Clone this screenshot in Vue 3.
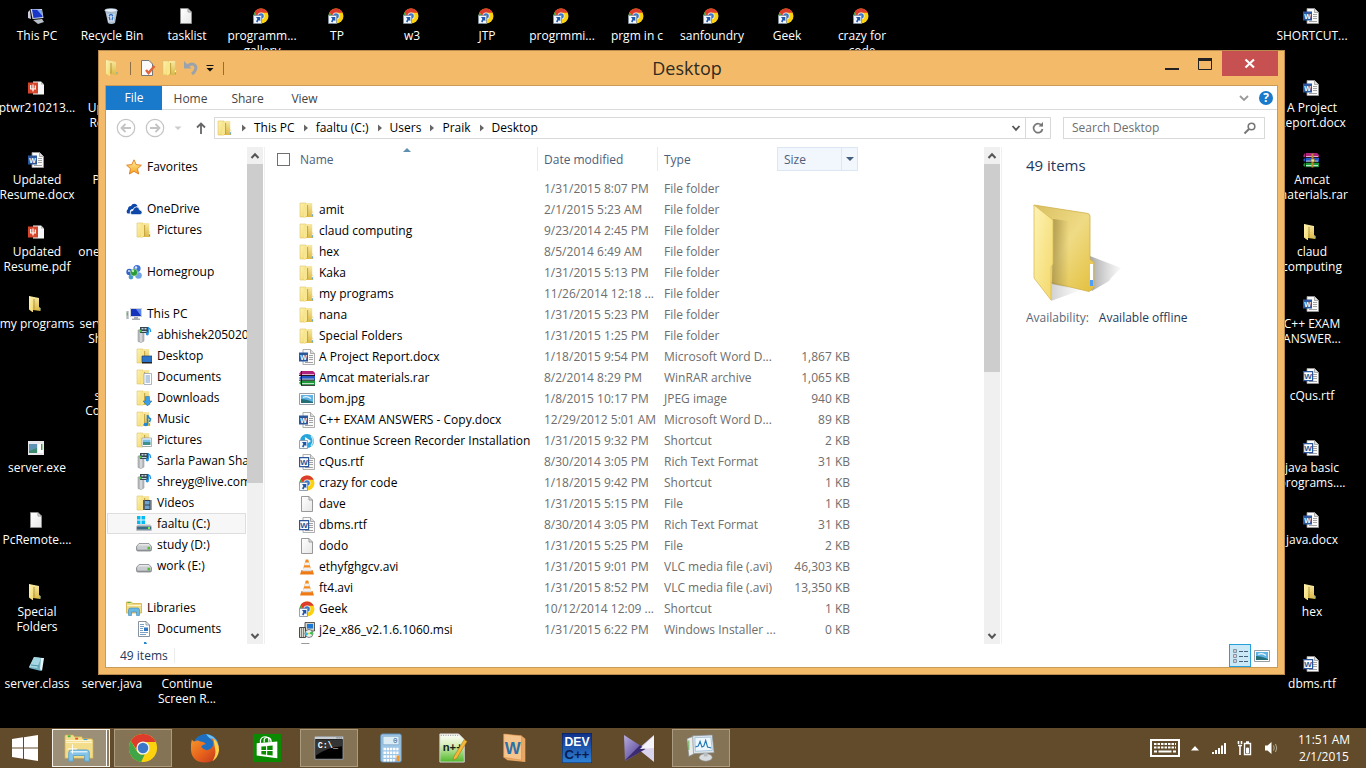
<template>
  <div class="screen">
    <svg class="sprite" aria-hidden="true">
      <defs>
        <linearGradient id="gLeaf" x1="0" y1="0" x2="1" y2="1">
          <stop offset="0" stop-color="#fdf3b4" />
          <stop offset="1" stop-color="#f3d768" />
        </linearGradient>
        <linearGradient id="gBack" x1="0" y1="0" x2="1" y2="1">
          <stop offset="0" stop-color="#d9bf62" />
          <stop offset="0.5" stop-color="#efdb85" />
          <stop offset="1" stop-color="#e3bf3c" />
        </linearGradient>
        <linearGradient id="gSide" x1="0" y1="0" x2="0" y2="1">
          <stop offset="0" stop-color="#f8e9a4" />
          <stop offset="1" stop-color="#dcb944" />
        </linearGradient>
        <linearGradient id="gShade" x1="0" y1="0" x2="1" y2="0">
          <stop offset="0" stop-color="#8f7a35" stop-opacity="0.6" />
          <stop offset="1" stop-color="#8f7a35" stop-opacity="0" />
        </linearGradient>
        <linearGradient id="gShadow" x1="0" y1="0" x2="1" y2="0">
          <stop offset="0" stop-color="#555" stop-opacity="0.55" />
          <stop offset="1" stop-color="#888" stop-opacity="0.05" />
        </linearGradient>
        <linearGradient id="gBlue" x1="0" y1="0" x2="0" y2="1">
          <stop offset="0" stop-color="#0f2f86" />
          <stop offset="1" stop-color="#2f83d8" />
        </linearGradient>
        <linearGradient id="gDrive" x1="0" y1="0" x2="0" y2="1">
          <stop offset="0" stop-color="#f5f5f5" />
          <stop offset="1" stop-color="#8c8f94" />
        </linearGradient>
        <linearGradient id="gStar" x1="0" y1="0" x2="0" y2="1">
          <stop offset="0" stop-color="#fff3a8" />
          <stop offset="1" stop-color="#f6a21c" />
        </linearGradient>
        <linearGradient id="gFox" x1="0" y1="0" x2="1" y2="1">
          <stop offset="0" stop-color="#f59a2d" />
          <stop offset="0.5" stop-color="#e8641c" />
          <stop offset="1" stop-color="#c0341c" />
        </linearGradient>
        <linearGradient id="gPaper" x1="0" y1="0" x2="1" y2="1">
          <stop offset="0" stop-color="#ffffff" />
          <stop offset="1" stop-color="#e6e6e6" />
        </linearGradient>
        <linearGradient id="gNpp" x1="0" y1="0" x2="0" y2="1">
          <stop offset="0" stop-color="#ffffff" />
          <stop offset="0.4" stop-color="#d8efb8" />
          <stop offset="1" stop-color="#4fb82a" />
        </linearGradient>
        <linearGradient id="gKm" x1="0" y1="0" x2="1" y2="1">
          <stop offset="0" stop-color="#b9aee0" />
          <stop offset="1" stop-color="#3c2a84" />
        </linearGradient>
      </defs>

      <symbol id="folder" viewBox="0 0 16 16">
        <path d="M1 1h6v14H1z" fill="url(#gLeaf)" stroke="#dcc268" stroke-width=".6" />
        <path d="M7 1h6.200v8.500l1 .8V15H7z" fill="url(#gSide)" />
        <path d="M5 1l3.400 2v10.500L5 15.700z" fill="#f8e58f" />
        <path d="M8.600 3v11" stroke="#bd9c38" stroke-width=".9" />
        <path d="M13.400 10.500v2" stroke="#fff" />
        <path d="M13.400 12.300v2" stroke="#5aa7dd" />
      </symbol>
      <symbol id="folder-open" viewBox="0 0 16 16">
        <path d="M1 0l10 2v9l1.500 1v3L5 14z" fill="url(#gSide)" />
        <path d="M1 0l4.500 2.500V9l-.5.500v7L1 13.500z" fill="url(#gLeaf)" />
        <path d="M6 3v10.500" stroke="#a58a37" stroke-width=".8" />
        <path d="M12 12v2" stroke="#5aa7dd" stroke-width=".8" />
      </symbol>
      <symbol id="folder-big" viewBox="0 0 88 98">
        <path d="M57 52L88 64 78 74l-2 3-17 10-4-4z" fill="url(#gShadow)" />
        <path d="M18 78l30 8-30 11z" fill="url(#gShadow)" opacity=".5" />
        <path d="M1 1l54 8.500q2 .5 2 3v43l4 2.500v26l-5 3.500-38-9z" fill="url(#gBack)" stroke="#d1b049" stroke-width=".8" />
        <path d="M20 15l16 2v67l-17-4z" fill="url(#gShade)" />
        <path d="M57 60h3v22h-3z" fill="#fff" />
        <path d="M57 76h3v6h-3z" fill="#4f9df5" />
        <path d="M1 1l19 15v44l-2 3v33L1 74z" fill="url(#gLeaf)" stroke="#d9bd5a" stroke-width=".8" />
      </symbol>

      <symbol id="pc" viewBox="0 0 16 16">
        <path d="M0 4l2-2 1 9-3-1z" fill="#ccd" />
        <path d="M2.500 1H14l1.500 9-11 1z" fill="#d5dbe6" />
        <path d="M4 1.500L13.500 2l1 7-9 1z" fill="#1836c8" />
        <path d="M9 1.700l4.500.3 1 6z" fill="#7fa8f5" />
        <path d="M5 12l9-1 2 3-6 2z" fill="#b9bfc9" />
      </symbol>
      <symbol id="recycle" viewBox="0 0 16 16">
        <path d="M2 2h12.500L12 15q-4 2-7 0z" fill="#aebfd2" />
        <ellipse cx="8" cy="2.300" rx="6.300" ry="1.800" fill="#e8f0f8" stroke="#8fa2b8" stroke-width=".6" />
        <path d="M5 6l1 8M8 5v9M11 6l-1 8" stroke="#e6edf5" stroke-width=".9" />
        <path d="M6 8l2-2 2 2M10 9l-1 3M6 9l1 3" stroke="#2a6fd0" stroke-width="1.200" fill="none" />
      </symbol>
      <symbol id="file" viewBox="0 0 16 16">
        <path d="M2.500.5h7.500l3.500 3.500v11.500h-11z" fill="url(#gPaper)" stroke="#8e8e8e" stroke-width=".9" />
        <path d="M10 .5V4h3.500" fill="none" stroke="#8e8e8e" stroke-width=".9" />
      </symbol>
      <symbol id="chrome-ball" viewBox="0 0 32 32">
        <circle cx="16" cy="16" r="15" fill="#fcd20f" />
        <path d="M3 8.500A15 15 0 0 1 29.500 9.500H16a7 7 0 0 0-6.500 9z" fill="#dd3b2c" />
        <path d="M3 8.500l6.500 11A7 7 0 0 0 18 22.500L14 31A15 15 0 0 1 3 8.500z" fill="#3fa546" />
        <circle cx="16" cy="16" r="7" fill="#f4f4f4" />
        <circle cx="16" cy="16" r="5.600" fill="#3b78c9" />
      </symbol>
      <symbol id="arrow-box" viewBox="0 0 16 16">
        <path d="M.5 7.500h8v8h-8z" fill="#f4f7fb" stroke="#7d8ea5" stroke-width=".8" />
        <path d="M3 9h4.300v4.300L5.900 12l-1.500 2.500-1.400-1L4.400 11z" fill="#1d56a8" />
      </symbol>
      <symbol id="chrome-link" viewBox="0 0 16 16">
        <use href="#chrome-ball" x="0" y="0" width="16" height="16" />
        <use href="#arrow-box" width="16" height="16" />
      </symbol>
      <symbol id="ppt" viewBox="0 0 16 16">
        <path d="M5 1.500h8l3 3v10H5z" fill="#f6f6f6" />
        <path d="M13 1.500v3h3" fill="#bbb" />
        <path d="M0 2.500h10v11H0z" fill="#d5452b" />
        <path d="M2.700 5v4h4.600V5.500M5 4.500v7" stroke="#fff" stroke-width="1.200" fill="none" />
      </symbol>
      <symbol id="page-lines" viewBox="0 0 16 16">
        <path d="M4 .5h7.500l4 4v11H4z" fill="#fafafa" stroke="#9a9a9a" stroke-width=".8" />
        <path d="M11.500.5v4h4" fill="#ddd" stroke="#9a9a9a" stroke-width=".8" />
        <path d="M10 6.500h4M10 8.500h4M10 10.500h4M6 13.500h8" stroke="#8d8d8d" stroke-width=".8" />
      </symbol>
      <symbol id="word" viewBox="0 0 16 16">
        <use href="#page-lines" width="16" height="16" />
        <path d="M0 3.500h9v9H0z" fill="#2b579a" />
        <text x="4.500" y="10.500" class="glyph" font-size="7" fill="#fff">W</text>
      </symbol>
      <symbol id="rtf" viewBox="0 0 16 16">
        <use href="#page-lines" width="16" height="16" />
        <path d="M.6 3.600h9v9h-9z" fill="#fff" stroke="#2b579a" stroke-width="1.200" />
        <text x="5" y="11" class="glyph" font-size="8" fill="#2b579a">W</text>
      </symbol>
      <symbol id="rar" viewBox="0 0 16 16">
        <path d="M2 1h12l2 2v3H2L0 4z" fill="#b0237a" />
        <path d="M2 6h14v4H2L0 8z" fill="#2458c4" />
        <path d="M2 10.500h14v4.500H2l-2-2z" fill="#1c9a3a" />
        <path d="M3 4.800h12M3 9.200h12M3 13.700h12" stroke="#fff" stroke-width=".9" />
        <path d="M0 5.500h16M0 10.200h16M2 15.400h14M2.500 1v14" stroke="#111" stroke-width=".9" />
      </symbol>
      <symbol id="rar-belt" viewBox="0 0 16 16">
        <use href="#rar" width="16" height="16" />
        <path d="M9.500 1.500v14" stroke="#b98733" stroke-width="2" />
        <path d="M8 7h3.500v3H8z" fill="#f3dc8b" stroke="#7c5a1b" stroke-width=".6" />
      </symbol>
      <symbol id="exe" viewBox="0 0 16 16">
        <path d="M0 1h16v14H0z" fill="#e8e8ec" />
        <path d="M1 4h8v9H1z" fill="#3d8a6f" />
        <path d="M1 4h8v4L1 11z" fill="#5f93b5" />
        <path d="M10 4h5v9h-5z" fill="#fff" />
        <path d="M13 4h1.500v6H13z" fill="#4c9a59" />
      </symbol>
      <symbol id="notepad" viewBox="0 0 16 16">
        <path d="M6 1l9 1-2 13-12-3z" fill="#6fb0c3" />
        <path d="M6 1l7 1-4 10-8-1z" fill="#a6d6e2" />
        <path d="M13 2l3 0-2 13-2-2z" fill="#e8f4f7" />
        <path d="M3 9l8 1" stroke="#4f93a9" />
      </symbol>
      <symbol id="star" viewBox="0 0 16 16">
        <path d="M8 .8l2.200 4.800 5.200.6-3.900 3.500 1.100 5.300L8 12.300 3.400 15l1.100-5.300L.6 6.200l5.200-.6z" fill="url(#gStar)" stroke="#e07b1c" stroke-width=".9" />
      </symbol>
      <symbol id="onedrive" viewBox="0 0 16 16">
        <path d="M1.500 12.500Q-.5 10 2 8q0-3 3-3 1.500-3 4.500-2 2 .8 2 2.500Q8 5 7 8 3 8.500 4 12.500z" fill="#0d47a8" />
        <path d="M6 13.500q-2-.5-1.500-2.500.5-1.500 2.500-1.500.5-3.500 3.500-3.500 2.500 0 3 3 2.500.3 2.500 2.500 0 2-2 2z" fill="#0d47a8" stroke="#fff" stroke-width=".5" />
      </symbol>
      <symbol id="homegroup" viewBox="0 0 16 16">
        <circle cx="11" cy="4.500" r="3.600" fill="#3e74d8" />
        <circle cx="3.500" cy="8" r="3.200" fill="#3562c9" />
        <circle cx="12.500" cy="11.500" r="3.300" fill="#6fa4e6" />
        <circle cx="5" cy="13" r="2.400" fill="#4e9acb" />
        <circle cx="8" cy="8.500" r="3.600" fill="#2b9a38" stroke="#d8f2d4" stroke-width=".5" />
        <circle cx="10" cy="3.500" r="1.200" fill="#dbe8ff" />
        <circle cx="3" cy="7" r="1" fill="#dbe8ff" />
        <circle cx="7" cy="7" r="1.200" fill="#b8efb2" />
      </symbol>
      <symbol id="this-pc" viewBox="0 0 16 16">
        <path d="M.3 5h2.400v8H.3z" fill="#b4b8bd" />
        <path d="M.8 6.500h1.200v3H.8z" fill="#57c240" />
        <path d="M4 2h12v9H4z" fill="#cdd2d9" />
        <path d="M5 3h10v7H5z" fill="#1633bd" />
        <path d="M10 3h5v7z" fill="#5c86ea" />
        <path d="M8 11h4v1.500h2V14H6v-1.500h2z" fill="#a9adb3" />
      </symbol>
      <symbol id="media" viewBox="0 0 16 16">
        <path d="M2 3l6-1v12l-3 1.500-3-1z" fill="#b9bcbf" stroke="#85898d" stroke-width=".5" />
        <path d="M5 3v12" stroke="#eceeef" />
        <path d="M4 0h8v6H4z" fill="#39434d" />
        <path d="M5.500 1h2v1.500h-2zM8.500 1h2v1.500h-2zM5.500 4h5v1h-5z" fill="#b9d6e8" />
        <circle cx="4.500" cy="4" r="1.200" fill="#4bc43c" />
        <path d="M12.500 0v6M12.500.5q2.500 1.500 2 4.500" stroke="#2b95e0" stroke-width="1.300" fill="none" />
        <circle cx="11.300" cy="6.800" r="1.600" fill="#2b95e0" />
      </symbol>
      <symbol id="f-desktop" viewBox="0 0 16 16">
        <use href="#folder" width="16" height="16" />
        <path d="M6 8h10v6.500H6z" fill="#2c74c9" stroke="#1d3e6e" stroke-width=".7" />
        <path d="M6 14h10v1.500H6z" fill="#222" />
      </symbol>
      <symbol id="f-docs" viewBox="0 0 16 16">
        <use href="#folder" width="16" height="16" />
        <path d="M8 4.500h7.500v11H8z" fill="#fff" stroke="#8c97a5" stroke-width=".7" />
        <path d="M9.500 7h4.500M9.500 9h4.500M9.500 11h4.500M9.500 13h4.500" stroke="#4c7fb5" stroke-width=".8" />
      </symbol>
      <symbol id="f-down" viewBox="0 0 16 16">
        <use href="#folder" width="16" height="16" />
        <path d="M9.500 6.500h4V11H16l-4.500 5L7 11h2.500z" fill="#3c9fe5" stroke="#1d6aae" stroke-width=".5" />
      </symbol>
      <symbol id="f-music" viewBox="0 0 16 16">
        <use href="#folder" width="16" height="16" />
        <path d="M11.500 4v9M11.500 4q1 3 3 4-.5 1.500-1 3" stroke="#1e87d6" stroke-width="1.600" fill="none" />
        <ellipse cx="9.800" cy="13.500" rx="2.300" ry="1.800" fill="#1e87d6" />
      </symbol>
      <symbol id="f-pics" viewBox="0 0 16 16">
        <use href="#folder" width="16" height="16" />
        <path d="M6 6h9.500v8.500H6z" fill="#fff" stroke="#8a95a0" stroke-width=".7" />
        <path d="M7 7.500h7.500V10H7z" fill="#77bfe9" />
        <path d="M7 10h7.500v3H7z" fill="#3f8f8b" />
      </symbol>
      <symbol id="f-video" viewBox="0 0 16 16">
        <use href="#folder" width="16" height="16" />
        <path d="M7 5h8.500v10H7z" fill="#34404c" />
        <path d="M9 6h4.500v3.500H9zM9 10.500h4.500V14H9z" fill="#6ea5cf" />
        <path d="M8 5.500v9M14.600 5.500v9" stroke="#e7edf2" stroke-width=".8" stroke-dasharray="1 1" />
      </symbol>
      <symbol id="drive-c" viewBox="0 0 16 16">
        <path d="M1 0h3.500v3.500H1zM5.500 0H9v3.500H5.500zM1 4.500h3.500V8H1zM5.500 4.500H9V8H5.500z" fill="#00bcf2" />
        <path d="M2 8.500h12l2 2v3q0 1.500-1.500 1.500h-13Q0 15 0 13.500v-3z" fill="#b9bfc5" />
        <path d="M1 10.500h14v3H1z" fill="#3a6d84" />
        <path d="M12 11h2v2h-2z" fill="#7cf04c" />
      </symbol>
      <symbol id="drive" viewBox="0 0 16 16">
        <path d="M3 6.500h10l2.500 3v3q0 1.500-1.500 1.500H2Q.5 14 .5 12.500v-3z" fill="url(#gDrive)" stroke="#7f8388" stroke-width=".8" />
        <path d="M1.500 9.500h13v3h-13z" fill="#c9ccd0" />
        <path d="M11.500 9.800h2.500v2.700h-2.500z" fill="#4bc22e" />
      </symbol>
      <symbol id="libs" viewBox="0 0 16 16">
        <path d="M.5 2h5l1 1.500h9V13H.5z" fill="#f0da82" stroke="#cfae44" stroke-width=".8" />
        <path d="M1.500 2.500h3" stroke="#46b649" />
        <path d="M1 5.500h14" stroke="#fff6c9" />
        <path d="M2.500 15.500V10q0-2 2-2h7q2 0 2 2v5.500h-3V12h-5v3.500z" fill="#6bb8e2" stroke="#3d87b8" stroke-width=".6" />
      </symbol>
      <symbol id="doc-lib" viewBox="0 0 16 16">
        <path d="M2.500.5h7.500l3.500 3.500v11.500h-11z" fill="#fff" stroke="#7b8794" stroke-width=".9" />
        <path d="M10 .5V4h3.500" fill="none" stroke="#7b8794" stroke-width=".8" />
        <path d="M4 3.500h4M4 5.500h4M4 7.500h3M4 9.500h3M4 11.500h8M4 13.500h6" stroke="#6d94bd" stroke-width=".9" />
        <path d="M8 6.500h4v3.500H8z" fill="#2d74c4" />
      </symbol>
      <symbol id="note" viewBox="0 0 16 16">
        <path d="M9 0V12M9 0q1 3.500 4.500 5-.5 2-1.500 4" stroke="#2588d0" stroke-width="2" fill="none" />
        <ellipse cx="7" cy="12.500" rx="3" ry="2.300" fill="#2588d0" />
      </symbol>
      <symbol id="jpg" viewBox="0 0 16 16">
        <path d="M.5 2.500h15v11H.5z" fill="#fff" stroke="#8b949c" stroke-width=".9" />
        <path d="M2 4h12v8H2z" fill="#5db3e6" />
        <path d="M2 8q5 0 12 3v1H2z" fill="#256f79" />
        <path d="M4 6.500q4-2 8 1" stroke="#e9f6fd" stroke-width="1.200" fill="none" />
      </symbol>
      <symbol id="recorder" viewBox="0 0 16 16">
        <circle cx="8" cy="8" r="7" fill="#2aa5dc" />
        <path d="M6 4l6 4-6 4z" fill="#fff" />
        <path d="M12 3q4 4 0 10" stroke="#bfe7f7" stroke-width="1.300" fill="none" />
        <use href="#arrow-box" width="16" height="16" />
      </symbol>
      <symbol id="vlc" viewBox="0 0 16 16">
        <path d="M6.800.5h2.400L12.500 12h-9z" fill="#f58a1f" />
        <path d="M6 3.500h4l.9 2.700H5.200zM4.600 8.500h6.900l.8 2.500H3.800z" fill="#f1f1f1" />
        <path d="M2.500 11h11l1.500 4.500H1z" fill="#ef7a12" />
        <path d="M3.500 11h9l.3 1.200H3.200z" fill="#d9dce0" />
      </symbol>
      <symbol id="msi" viewBox="0 0 16 16">
        <path d="M6 .5h9.500V9H6z" fill="#d2d2c8" stroke="#333" stroke-width=".8" />
        <path d="M8 2h6v4.500H8z" fill="#1c79d8" />
        <path d="M.5 5.500h6v10h-6z" fill="#d8d8ce" stroke="#222" stroke-width=".8" />
        <path d="M2.500 5.500v10M4.500 5.500v10" stroke="#444" stroke-width=".6" />
        <circle cx="10" cy="11.500" r="4" fill="#e7f0ea" stroke="#333" stroke-width=".6" />
        <path d="M10 11.500l3-2.500q1.200 2 .5 4z" fill="#37c24a" />
        <path d="M10 11.500L7 14q-1-2-.5-4z" fill="#2fb6e6" />
        <circle cx="10" cy="11.500" r="1" fill="#e8de3a" />
      </symbol>

      <symbol id="t-explorer" viewBox="0 0 32 32">
        <path d="M1 3q0-1 1-1h8l1 2h8l1 2h9q2 0 2 2v19H1z" fill="#f3dd8b" stroke="#c9a84b" stroke-width=".7" />
        <path d="M4 2.500h3v2H4z" fill="#39b54a" />
        <path d="M12 5h3v2h-3z" fill="#e2562b" />
        <path d="M21 6.500h4v2h-4z" fill="#2f9be0" />
        <path d="M2 8h27M2 10h28" stroke="#fff8d8" />
        <path d="M5 30V21q0-3 3-3h16q3 0 3 3v9h-5v-6H10v6z" fill="#84c4e8" stroke="#4f9bc8" stroke-width=".8" />
        <path d="M7 20h18" stroke="#dff2fc" stroke-width="1.500" />
        <path d="M9 12v10M4 17h10" stroke="#fff" stroke-width="1" />
      </symbol>
      <symbol id="t-firefox" viewBox="0 0 32 32">
        <circle cx="17" cy="15" r="14" fill="#1f6fc0" />
        <path d="M17 1q9 1 13 10-5-3-8-5t-5-5z" fill="#6fc1ee" />
        <path d="M2 7q1 2 3 2 3-2 6 0 4 0 6 3-4 0-5 3 5 6 11 1 4-5-1-11 9 3 9 12-1 14-15 14.500Q2 31 1 18q-.5-6 1-11z" fill="url(#gFox)" />
        <path d="M25 6q6 4 6 12-1 8-7 12 4-7 3-12t-2-12z" fill="#fbd24a" />
      </symbol>
      <symbol id="t-store" viewBox="0 0 32 32">
        <path d="M1 1h30v30H1z" fill="#0a8a00" />
        <path d="M5 11l22-2v18L5 24z" fill="#fff" />
        <path d="M9 12V8q1-4 5-4t4 4v2M13 10V7q1-3 4.500-2 3 1 3 5" stroke="#fff" stroke-width="1.300" fill="none" />
        <path d="M10 14.500l5-.5v4h-5zM16.200 13.900l5.800-.6V18h-5.800zM10 19.200h5v4l-5-.6zM16.200 19.200H22v4.900l-5.800-.7z" fill="#0a8a00" />
      </symbol>
      <symbol id="t-cmd" viewBox="0 0 32 32">
        <path d="M1 4h30v24H1z" fill="#000" stroke="#9aa0a6" />
        <path d="M1 4h30v2.500H1z" fill="#c8cdd2" />
        <path d="M24 5.200h6" stroke="#4d5a66" stroke-dasharray="1.200 1" />
        <path d="M2 7h28v7Q14 15 2 24z" fill="#343434" />
        <text x="4" y="16" font-family="Liberation Mono, monospace" font-size="9" font-weight="bold" fill="#fff">C:\_</text>
      </symbol>
      <symbol id="t-calc" viewBox="0 0 32 32">
        <rect x="5" y="1" width="22" height="30" rx="2" fill="#9cc5e6" stroke="#5c90bb" />
        <path d="M7.500 3.500h17v9h-17z" fill="#dcecf5" stroke="#7aa5c5" stroke-width=".7" />
        <text x="18" y="11" font-family="Liberation Mono, monospace" font-size="8" fill="#27608c">0</text>
        <path d="M8 17h16M8 21h16M8 25h16M8 29h12" stroke="#fff" stroke-width="2.600" stroke-dasharray="2.600 .8" />
        <path d="M22 24h3v6h-3z" fill="#f0962b" />
      </symbol>
      <symbol id="t-npp" viewBox="0 0 32 32">
        <path d="M2 1h20l6 6v24H2z" fill="url(#gNpp)" stroke="#d9d9d9" />
        <path d="M3 2.500h19" stroke="#888" stroke-dasharray="1 1.500" />
        <text x="5" y="19" class="glyph-left" font-size="12" fill="#16241a">n++</text>
        <path d="M28 7l3 2-11 18-4 2 1-4z" fill="#f5b93a" stroke="#a2701a" stroke-width=".6" />
      </symbol>
      <symbol id="t-word" viewBox="0 0 32 32">
        <path d="M4 1l19 2 4 3v25l-19-2-4-3z" fill="#e9a766" />
        <path d="M4 1l19 2v26L4 26z" fill="#f6c48d" stroke="#d58b44" stroke-width=".6" />
        <text x="13.500" y="22" class="glyph" font-size="18" fill="#2b70a8">W</text>
      </symbol>
      <symbol id="t-dev" viewBox="0 0 32 32">
        <path d="M0 0h32v32H0z" fill="url(#gBlue)" stroke="#0c1f4d" />
        <text x="16" y="14" class="glyph" font-size="13" fill="#fff">DEV</text>
        <text x="16" y="28" class="glyph" font-size="14" fill="#081c50">C++</text>
      </symbol>
      <symbol id="t-km" viewBox="0 0 32 32">
        <path d="M0 2l23 15L1 30z" fill="url(#gKm)" />
        <path d="M32 2v29L15 17z" fill="#d9d3ee" />
        <path d="M0 30l23-13-6-4z" fill="#3b2b70" />
        <path d="M32 3v13L17 17z" fill="#f4f2fb" />
      </symbol>
      <symbol id="t-perf" viewBox="0 0 32 32">
        <path d="M1 6l8-3v19l-6 3z" fill="#e9ece9" stroke="#7c8388" stroke-width=".7" />
        <path d="M3 8v10" stroke="#57a84b" />
        <path d="M7 3l21-1 2 19-22 1z" fill="#dfe4e8" stroke="#82898f" stroke-width=".7" />
        <path d="M9.500 5l17-.6L28 18.500l-18 1z" fill="#eef7fd" stroke="#7cabc9" stroke-width=".6" />
        <path d="M10 15l3-1 2-5 2 6 2-1 2-6 2 7 4 1" stroke="#2176b5" stroke-width="1.200" fill="none" />
        <ellipse cx="21" cy="26" rx="7" ry="4" fill="#d9dcdf" stroke="#8b9095" stroke-width=".6" />
        <path d="M19 21h4v4h-4z" fill="#b6bbc0" />
      </symbol>
    </svg>

    <main class="desktop">
      <ul class="shortcuts">
        <li v-for="s in shortcuts" :key="s.col + '-' + s.row" class="shortcut" :style="{ gridColumn: s.col, gridRow: s.row }">
          <svg class="icon"><use :href="'#' + s.icon" /></svg>
          <span class="shortcut-label"><span v-for="line in s.lines" :key="line">{{ line }}</span></span>
        </li>
      </ul>

      <section class="window">
        <header class="titlebar">
          <div class="quick">
            <svg class="icon"><use href="#folder-open" /></svg>
            <i class="quick-sep"></i>
            <button type="button" class="plain" aria-label="Properties">
              <svg class="icon" viewBox="0 0 16 16">
                <path d="M1.500.5H9L12.500 4v11.500h-11z" fill="#fafafa" stroke="#777" />
                <path d="M6 10l2.500 3 6-7" stroke="#e0633d" stroke-width="2.500" fill="none" />
              </svg>
            </button>
            <button type="button" class="plain" aria-label="New folder">
              <svg class="icon"><use href="#folder" /></svg>
            </button>
            <button type="button" class="plain" aria-label="Undo">
              <svg class="icon" viewBox="0 0 16 16">
                <path d="M3.500 6q5-4 8 0 1.500 4-3.500 8" stroke="#9aa3ab" stroke-width="3" fill="none" />
                <path d="M0 1v7.500h7.500z" fill="#9aa3ab" />
              </svg>
            </button>
            <button type="button" class="plain" aria-label="Customize toolbar">
              <svg class="icon-tiny" viewBox="0 0 8 8"><path d="M.5 1.500h7" stroke="#111" /><path d="M.5 4h7L4 7.500z" fill="#111" /></svg>
            </button>
            <i class="quick-sep"></i>
          </div>
          <h1 class="title">Desktop</h1>
          <div class="controls">
            <button type="button" class="control" aria-label="Minimize">
              <svg width="16" height="16" viewBox="0 0 16 16"><path d="M1 13h14" stroke="#222" stroke-width="2" /></svg>
            </button>
            <button type="button" class="control" aria-label="Maximize">
              <svg width="16" height="16" viewBox="0 0 16 16"><path d="M1.500 3h13v10.500h-13z" fill="none" stroke="#222" /><path d="M1 3.500h14" stroke="#222" stroke-width="3" /></svg>
            </button>
            <button type="button" class="control close" aria-label="Close">
              <svg width="16" height="16" viewBox="0 0 16 16"><path d="M3.500 3.500l8.500 8M12 3.500l-8.500 8" stroke="#fff" stroke-width="2.200" /></svg>
            </button>
          </div>
        </header>

        <div class="frame">
          <nav class="ribbon">
            <button type="button" class="tab file">File</button>
            <button v-for="t in tabs" :key="t" type="button" class="tab">{{ t }}</button>
            <span class="spacer"></span>
            <button type="button" class="plain" aria-label="Expand ribbon">
              <svg class="chevron" viewBox="0 0 10 10"><path d="M1 3l4 4 4-4" stroke="#999" stroke-width="1.800" fill="none" /></svg>
            </button>
            <button type="button" class="help" aria-label="Help">?</button>
          </nav>

          <div class="address-row">
            <button type="button" class="plain" aria-label="Back">
              <svg width="20" height="20" viewBox="0 0 20 20" fill="none" stroke="#c4c4c4">
                <circle cx="10" cy="10" r="8.700" stroke-width="1.200" />
                <path d="M15 10H6M9.500 6L5.500 10l4 4" stroke-width="1.800" />
              </svg>
            </button>
            <button type="button" class="plain" aria-label="Forward">
              <svg width="20" height="20" viewBox="0 0 20 20" fill="none" stroke="#c4c4c4">
                <circle cx="10" cy="10" r="8.700" stroke-width="1.200" />
                <path d="M5 10h9M10.500 6l4 4-4 4" stroke-width="1.800" />
              </svg>
            </button>
            <button type="button" class="plain" aria-label="Recent locations">
              <svg class="icon-tiny" viewBox="0 0 8 8"><path d="M.5 2.500h7L4 6z" fill="#ccc" /></svg>
            </button>
            <button type="button" class="plain up" aria-label="Up">
              <svg width="12" height="14" viewBox="0 0 12 14"><path d="M6 13V3M2 6.500L6 2.500l4 4" stroke="#666" stroke-width="1.800" fill="none" /></svg>
            </button>
            <div class="address">
              <svg class="icon"><use href="#folder" /></svg>
              <template v-for="c in crumbs" :key="c">
                <svg class="crumb-arrow" viewBox="0 0 4 8"><path d="M0 .5L4 4 0 7.500z" fill="#666" /></svg>
                <a href="#" class="crumb">{{ c }}</a>
              </template>
              <span class="spacer"></span>
              <button type="button" class="plain drop" aria-label="Previous locations">
                <svg class="chevron" viewBox="0 0 10 10"><path d="M1.500 3L5 6.800 8.500 3" stroke="#555" stroke-width="1.800" fill="none" /></svg>
              </button>
              <button type="button" class="plain refresh" aria-label="Refresh">
                <svg width="14" height="14" viewBox="0 0 14 14"><path d="M11 5A4.500 4.500 0 1 0 11.500 8" stroke="#777" stroke-width="1.700" fill="none" /><path d="M7.500 5.500H12V1z" fill="#777" /></svg>
              </button>
            </div>
            <div class="search">
              <input type="text" placeholder="Search Desktop" aria-label="Search Desktop" />
              <svg width="14" height="14" viewBox="0 0 14 14" fill="none" stroke="#777"><circle cx="8.500" cy="5.500" r="3.300" stroke-width="1.600" /><path d="M6 8l-4.500 4.500" stroke-width="2" /></svg>
            </div>
          </div>

          <div class="body">
            <aside class="nav-pane">
              <ul v-for="g in groups" :key="g.name" class="nav-group">
                <li class="nav-item">
                  <svg class="icon"><use :href="'#' + g.icon" /></svg>
                  <span>{{ g.name }}</span>
                </li>
                <li v-for="n in g.items" :key="n.name" class="nav-item child" :class="{ selected: n.selected }">
                  <svg class="icon"><use :href="'#' + n.icon" /></svg>
                  <span>{{ n.name }}</span>
                </li>
              </ul>
            </aside>
            <div class="scrollbar">
              <button type="button" class="scroll-btn" aria-label="Scroll up"><svg class="chevron" viewBox="0 0 10 10"><path d="M1.500 7L5 3.200 8.500 7" /></svg></button>
              <div class="track"><div class="thumb" :style="{ height: navThumb }"></div></div>
              <button type="button" class="scroll-btn" aria-label="Scroll down"><svg class="chevron" viewBox="0 0 10 10"><path d="M1.500 3L5 6.800 8.500 3" /></svg></button>
            </div>

            <div class="file-pane">
              <table class="files">
                <colgroup>
                  <col class="col-name" />
                  <col class="col-mid" />
                  <col class="col-mid" />
                  <col class="col-size" />
                </colgroup>
                <thead>
                  <tr>
                    <th>
                      <div class="head head-name">
                        <input type="checkbox" class="check" aria-label="Select all" />
                        <span>Name</span>
                        <svg class="sort" viewBox="0 0 8 4"><path d="M0 4l4-4 4 4z" fill="#5f8fb0" /></svg>
                      </div>
                    </th>
                    <th><div class="head split">Date modified</div></th>
                    <th><div class="head split">Type</div></th>
                    <th>
                      <div class="head hot">
                        <span>Size</span>
                        <button type="button" class="plain filter" aria-label="Filter by size">
                          <svg class="icon-tiny" viewBox="0 0 8 8"><path d="M0 2h8L4 6z" fill="#44607f" /></svg>
                        </button>
                      </div>
                    </th>
                  </tr>
                </thead>
                <tbody>
                  <tr v-for="(f, i) in files" :key="i">
                    <td>
                      <div class="file-name">
                        <svg v-if="f[0]" class="icon"><use :href="'#' + f[0]" /></svg>
                        <span>{{ f[1] }}</span>
                      </div>
                    </td>
                    <td class="meta">{{ f[2] }}</td>
                    <td class="meta">{{ f[3] }}</td>
                    <td class="meta size">{{ f[4] }}</td>
                  </tr>
                </tbody>
              </table>
            </div>
            <div class="scrollbar">
              <button type="button" class="scroll-btn" aria-label="Scroll up"><svg class="chevron" viewBox="0 0 10 10"><path d="M1.500 7L5 3.200 8.500 7" /></svg></button>
              <div class="track"><div class="thumb" :style="{ height: fileThumb }"></div></div>
              <button type="button" class="scroll-btn" aria-label="Scroll down"><svg class="chevron" viewBox="0 0 10 10"><path d="M1.500 3L5 6.800 8.500 3" /></svg></button>
            </div>

            <aside class="details">
              <h2>49 items</h2>
              <svg class="preview"><use href="#folder-big" /></svg>
              <dl>
                <dt>Availability:</dt>
                <dd>Available offline</dd>
              </dl>
            </aside>
          </div>

          <footer class="status">
            <span class="count">49 items</span>
            <span class="spacer"></span>
            <button type="button" class="view active" aria-label="Details view">
              <svg width="16" height="16" viewBox="0 0 16 16" fill="none">
                <path d="M1.500 1.500h3v3h-3zM1.500 6.500h3v3h-3zM1.500 11.500h3v3h-3z" fill="#fff" stroke="#8295a8" />
                <path d="M2.500 3h1M2.500 13h1" stroke="#333" /><path d="M2.500 8h1" stroke="#d33" />
                <path d="M7 3.500h9M7 8.500h9M7 13.500h9" stroke="#45617c" stroke-dasharray="4 1" />
              </svg>
            </button>
            <button type="button" class="view" aria-label="Thumbnail view">
              <svg class="icon"><use href="#jpg" /></svg>
            </button>
          </footer>
        </div>
      </section>
    </main>

    <footer class="taskbar">
      <button type="button" class="start" aria-label="Start">
        <svg width="28" height="26" viewBox="0 0 28 26"><path d="M1 4l11-1.700V12.500H1zM13 2.200L27 0v12.500H13zM1 13.500h11v10.200L1 22zM13 13.500h14V26l-14-2.200z" fill="#fff" /></svg>
      </button>
      <button v-for="a in apps" :key="a.icon" type="button" class="app" :class="a.state" :aria-label="a.name">
        <svg class="app-icon"><use :href="'#' + a.icon" /></svg>
      </button>
      <span class="spacer"></span>
      <div class="tray">
        <svg width="30" height="18" viewBox="0 0 30 18">
          <path d="M1 1h28v16H1z" fill="none" stroke="#fff" stroke-width="2" />
          <path d="M4 5h22M4 8.500h22" stroke="#fff" stroke-width="2" stroke-dasharray="2.500 1" />
          <path d="M4 12.500h3M8.500 12.500h13M23 12.500h3" stroke="#fff" stroke-width="2" />
        </svg>
        <svg width="8" height="6" viewBox="0 0 8 6"><path d="M0 5.500l4-4.500 4 4.500z" fill="#fff" /></svg>
        <svg width="16" height="14" viewBox="0 0 16 14"><path d="M3 13v-2M6 13V9M9 13V7M12 13V4.500M15 13V2" stroke="#fff" stroke-width="2" /></svg>
        <svg width="16" height="16" viewBox="0 0 16 16" fill="none" stroke="#fff">
          <path d="M7.500 3.500h6v11h-6zM9 2h3" stroke-width="1.400" /><path d="M9.500 8h2v5h-2z" fill="#fff" />
          <path d="M1.500 1v3M4.500 1v3M1 5.500h4M3 6v9" stroke-width="1.600" />
        </svg>
        <svg width="14" height="14" viewBox="0 0 14 14"><path d="M1 4.500h2.500L7.500 1v12L3.500 9.500H1z" fill="#fff" /><path d="M9.500 4.500q1.500 2.500 0 5M11.500 3q2.500 4 0 8" stroke="#b9ab93" fill="none" /></svg>
      </div>
      <div class="clock"><span>11:51 AM</span><span>2/1/2015</span></div>
    </footer>
  </div>
</template>

<script setup>
const tabs = ['Home', 'Share', 'View']
const crumbs = ['This PC', 'faaltu (C:)', 'Users', 'Praik', 'Desktop']
const navThumb = '69%'
const fileThumb = '45%'

// col / row are cells of the desktop icon grid
const shortcuts = [
  { col: 1, row: 1, icon: 'pc', lines: ['This PC'] },
  { col: 1, row: 2, icon: 'ppt', lines: ['ptwr210213...'] },
  { col: 1, row: 3, icon: 'word', lines: ['Updated', 'Resume.docx'] },
  { col: 1, row: 4, icon: 'ppt', lines: ['Updated', 'Resume.pdf'] },
  { col: 1, row: 5, icon: 'folder-open', lines: ['my programs'] },
  { col: 1, row: 7, icon: 'exe', lines: ['server.exe'] },
  { col: 1, row: 8, icon: 'file', lines: ['PcRemote....'] },
  { col: 1, row: 9, icon: 'folder-open', lines: ['Special', 'Folders'] },
  { col: 1, row: 10, icon: 'notepad', lines: ['server.class'] },
  { col: 2, row: 1, icon: 'recycle', lines: ['Recycle Bin'] },
  { col: 2, row: 2, icon: 'word', lines: ['Updated', 'Resume'] },
  { col: 2, row: 3, icon: 'file', lines: ['Project'] },
  { col: 2, row: 4, icon: 'file', lines: ['onedrive.txt'] },
  { col: 2, row: 5, icon: 'exe', lines: ['server.exe -', 'Shortcut'] },
  { col: 2, row: 6, icon: 'file', lines: ['server', 'Copy.java'] },
  { col: 2, row: 10, icon: 'notepad', lines: ['server.java'] },
  { col: 3, row: 1, icon: 'file', lines: ['tasklist'] },
  { col: 3, row: 10, icon: 'recorder', lines: ['Continue', 'Screen R...'] },
  { col: 4, row: 1, icon: 'chrome-link', lines: ['programm...', 'gallery'] },
  { col: 5, row: 1, icon: 'chrome-link', lines: ['TP'] },
  { col: 6, row: 1, icon: 'chrome-link', lines: ['w3'] },
  { col: 7, row: 1, icon: 'chrome-link', lines: ['JTP'] },
  { col: 8, row: 1, icon: 'chrome-link', lines: ['progrmmi...'] },
  { col: 9, row: 1, icon: 'chrome-link', lines: ['prgm in c'] },
  { col: 10, row: 1, icon: 'chrome-link', lines: ['sanfoundry'] },
  { col: 11, row: 1, icon: 'chrome-link', lines: ['Geek'] },
  { col: 12, row: 1, icon: 'chrome-link', lines: ['crazy for', 'code'] },
  { col: 18, row: 1, icon: 'word', lines: ['SHORTCUT...'] },
  { col: 18, row: 2, icon: 'word', lines: ['A Project', 'Report.docx'] },
  { col: 18, row: 3, icon: 'rar-belt', lines: ['Amcat', 'materials.rar'] },
  { col: 18, row: 4, icon: 'folder-open', lines: ['claud', 'computing'] },
  { col: 18, row: 5, icon: 'word', lines: ['C++ EXAM', 'ANSWER...'] },
  { col: 18, row: 6, icon: 'rtf', lines: ['cQus.rtf'] },
  { col: 18, row: 7, icon: 'rtf', lines: ['java basic', 'programs....'] },
  { col: 18, row: 8, icon: 'word', lines: ['java.docx'] },
  { col: 18, row: 9, icon: 'folder-open', lines: ['hex'] },
  { col: 18, row: 10, icon: 'rtf', lines: ['dbms.rtf'] }
]

const groups = [
  { name: 'Favorites', icon: 'star', items: [] },
  { name: 'OneDrive', icon: 'onedrive', items: [{ name: 'Pictures', icon: 'folder' }] },
  { name: 'Homegroup', icon: 'homegroup', items: [] },
  {
    name: 'This PC',
    icon: 'this-pc',
    items: [
      { name: 'abhishek2050202', icon: 'media' },
      { name: 'Desktop', icon: 'f-desktop' },
      { name: 'Documents', icon: 'f-docs' },
      { name: 'Downloads', icon: 'f-down' },
      { name: 'Music', icon: 'f-music' },
      { name: 'Pictures', icon: 'f-pics' },
      { name: 'Sarla Pawan Sharma', icon: 'media' },
      { name: 'shreyg@live.com', icon: 'media' },
      { name: 'Videos', icon: 'f-video' },
      { name: 'faaltu (C:)', icon: 'drive-c', selected: true },
      { name: 'study (D:)', icon: 'drive' },
      { name: 'work (E:)', icon: 'drive' }
    ]
  },
  {
    name: 'Libraries',
    icon: 'libs',
    items: [
      { name: 'Documents', icon: 'doc-lib' },
      { name: '', icon: 'note' }
    ]
  }
]

// icon, name, modified, type, size
const files = [
  ['', '', '1/31/2015 8:07 PM', 'File folder', ''],
  ['folder', 'amit', '2/1/2015 5:23 AM', 'File folder', ''],
  ['folder', 'claud computing', '9/23/2014 2:45 PM', 'File folder', ''],
  ['folder', 'hex', '8/5/2014 6:49 AM', 'File folder', ''],
  ['folder', 'Kaka', '1/31/2015 5:13 PM', 'File folder', ''],
  ['folder', 'my programs', '11/26/2014 12:18 ...', 'File folder', ''],
  ['folder', 'nana', '1/31/2015 5:23 PM', 'File folder', ''],
  ['folder', 'Special Folders', '1/31/2015 1:25 PM', 'File folder', ''],
  ['word', 'A Project Report.docx', '1/18/2015 9:54 PM', 'Microsoft Word D...', '1,867 KB'],
  ['rar', 'Amcat materials.rar', '8/2/2014 8:29 PM', 'WinRAR archive', '1,065 KB'],
  ['jpg', 'bom.jpg', '1/8/2015 10:17 PM', 'JPEG image', '940 KB'],
  ['word', 'C++ EXAM ANSWERS - Copy.docx', '12/29/2012 5:01 AM', 'Microsoft Word D...', '89 KB'],
  ['recorder', 'Continue Screen Recorder Installation', '1/31/2015 9:32 PM', 'Shortcut', '2 KB'],
  ['rtf', 'cQus.rtf', '8/30/2014 3:05 PM', 'Rich Text Format', '31 KB'],
  ['chrome-link', 'crazy for code', '1/18/2015 9:42 PM', 'Shortcut', '1 KB'],
  ['file', 'dave', '1/31/2015 5:15 PM', 'File', '1 KB'],
  ['rtf', 'dbms.rtf', '8/30/2014 3:05 PM', 'Rich Text Format', '31 KB'],
  ['file', 'dodo', '1/31/2015 5:25 PM', 'File', '2 KB'],
  ['vlc', 'ethyfghgcv.avi', '1/31/2015 9:01 PM', 'VLC media file (.avi)', '46,303 KB'],
  ['vlc', 'ft4.avi', '1/31/2015 8:52 PM', 'VLC media file (.avi)', '13,350 KB'],
  ['chrome-link', 'Geek', '10/12/2014 12:09 ...', 'Shortcut', '1 KB'],
  ['msi', 'j2e_x86_v2.1.6.1060.msi', '1/31/2015 6:22 PM', 'Windows Installer ...', '0 KB'],
  ['file', '', '', '', '']
]

const apps = [
  { name: 'File Explorer', icon: 't-explorer', state: 'current' },
  { name: 'Chrome', icon: 'chrome-ball', state: 'open' },
  { name: 'Firefox', icon: 't-firefox' },
  { name: 'Store', icon: 't-store' },
  { name: 'Command Prompt', icon: 't-cmd', state: 'open' },
  { name: 'Calculator', icon: 't-calc' },
  { name: 'Notepad++', icon: 't-npp' },
  { name: 'WordWeb', icon: 't-word' },
  { name: 'Dev-C++', icon: 't-dev' },
  { name: 'KMPlayer', icon: 't-km' },
  { name: 'Task Manager', icon: 't-perf', state: 'open' }
]
</script>

<style>
body {
  background: #000;
}
</style>

<style scoped>
.screen {
  height: 100vh;
  display: flex;
  flex-direction: column;
  overflow: hidden;
  background: #000;
  font-family: "Segoe UI", "Open Sans", "Noto Sans", sans-serif;
  font-size: 12px;
  line-height: 15px;
  color: #000;
}

.screen * {
  box-sizing: border-box;
}

.screen svg {
  display: block;
  flex-shrink: 0;
}

.screen .sprite {
  position: absolute;
  width: 0;
  height: 0;
  visibility: hidden;
}

button,
input {
  font: inherit;
  color: inherit;
}

.plain {
  display: flex;
  align-items: center;
  padding: 0;
  border: 0;
  background: none;
}

.icon {
  width: 16px;
  height: 16px;
}

.icon-tiny {
  width: 8px;
  height: 8px;
}

.chevron {
  width: 10px;
  height: 10px;
}

.spacer {
  flex: 1;
}

.glyph {
  font-family: "Liberation Sans", sans-serif;
  font-weight: bold;
  text-anchor: middle;
}

.glyph-left {
  font-family: "Liberation Sans", sans-serif;
  font-weight: bold;
}

/* desktop */
.desktop {
  position: relative;
  flex: 1;
  min-height: 0;
}

.shortcuts {
  display: grid;
  grid-template-columns: repeat(auto-fill, 75px);
  grid-auto-rows: 72px;
  margin: 0;
  padding: 0;
  list-style: none;
}

.shortcut {
  display: flex;
  flex-direction: column;
  align-items: center;
  gap: 4px;
  padding: 8px 1px 0 0;
  color: #fff;
}

.shortcut .icon {
  margin-right: 2px;
}

.shortcut-label {
  display: flex;
  flex-direction: column;
  align-items: center;
  white-space: nowrap;
}

/* explorer window */
.window {
  position: absolute;
  inset: 50px 81px 53px 98px;
  display: flex;
  flex-direction: column;
  padding: 0 6px 6px;
  background: #f2ba69;
  border: 1px solid #b88a4b;
}

.titlebar {
  display: grid;
  grid-template-columns: 1fr auto 1fr;
  height: 34px;
}

.quick {
  display: flex;
  align-items: center;
  gap: 6px;
}

.quick-sep {
  width: 1px;
  height: 13px;
  margin: 0 3px;
  background: #8d6f45;
}

.title {
  margin: 0 9px 0 0;
  font-size: 18px;
  line-height: 34px;
  font-weight: normal;
  color: #2f2a22;
}

.controls {
  display: flex;
  justify-content: flex-end;
  align-items: flex-start;
  gap: 1px;
}

.control {
  display: flex;
  justify-content: center;
  align-items: center;
  width: 32px;
  height: 25px;
  padding: 0;
  border: 0;
  background: none;
}

.close {
  width: 56px;
  background: #c75050;
}

.frame {
  flex: 1;
  min-height: 0;
  display: flex;
  flex-direction: column;
  background: #fff;
  border: 1px solid #c99b56;
}

.ribbon {
  display: flex;
  align-items: center;
  height: 24px;
  padding-right: 4px;
  border-bottom: 1px solid #dadbdc;
}

.tab {
  width: 57px;
  height: 24px;
  padding: 2px 0 0;
  border: 0;
  background: none;
  color: #444;
}

.tab.file {
  width: 56px;
  padding: 0;
  background: #1979ca;
  color: #fff;
}

.help {
  width: 14px;
  height: 14px;
  margin-left: 10px;
  padding: 0;
  border: 0;
  border-radius: 50%;
  background: #1979ca;
  color: #fff;
  font-weight: bold;
  line-height: 14px;
}

.address-row {
  display: flex;
  align-items: center;
  height: 37px;
  padding: 0 12px 2px 10px;
}

.address-row > .plain {
  margin-right: 9px;
}

.address-row > .up {
  margin: 0 7px 0 4px;
}

.address {
  flex: 1;
  display: flex;
  align-items: center;
  height: 22px;
  padding-left: 2px;
  border: 1px solid #d9d9d9;
}

.crumb-arrow {
  width: 4px;
  height: 8px;
  margin: 0 8px 0 9px;
}

.crumb {
  color: #000;
  text-decoration: none;
}

.drop {
  width: 18px;
  height: 20px;
  justify-content: center;
}

.refresh {
  width: 25px;
  height: 20px;
  justify-content: center;
  border-left: 1px solid #d9d9d9;
}

.search {
  display: flex;
  align-items: center;
  width: 202px;
  height: 22px;
  margin-left: 12px;
  padding: 0 7px 0 8px;
  border: 1px solid #d9d9d9;
}

.search input {
  flex: 1;
  min-width: 0;
  padding: 0;
  border: 0;
  outline: 0;
  background: none;
}

.search input::placeholder {
  color: #6d6d6d;
  opacity: 1;
}

.body {
  flex: 1;
  min-height: 0;
  display: flex;
}

.nav-pane {
  width: 141px;
  padding: 9px 1px 0;
  overflow: hidden;
}

.nav-group {
  margin: 0 0 21px;
  padding: 0;
  list-style: none;
}

.nav-item {
  display: flex;
  align-items: center;
  gap: 5px;
  height: 21px;
  padding-left: 18px;
  border: 1px solid transparent;
  white-space: nowrap;
}

.nav-item.child {
  padding-left: 28px;
}

.nav-item.selected {
  background: #f7f7f7;
  border-color: #dedede;
}

.scrollbar {
  display: flex;
  flex-direction: column;
  width: 16px;
  background: #f0f0f0;
}

.scroll-btn {
  display: flex;
  justify-content: center;
  align-items: center;
  height: 17px;
  padding: 0;
  border: 0;
  background: none;
}

.scroll-btn path {
  fill: none;
  stroke: #555;
  stroke-width: 2;
}

.track {
  flex: 1;
}

.thumb {
  background: #cdcdcd;
}

.file-pane {
  flex: 1;
  min-width: 0;
  margin-left: 1px;
  padding-left: 12px;
  border-left: 1px solid #f0f0f0;
  overflow: hidden;
}

.files {
  width: 581px;
  table-layout: fixed;
  border-collapse: collapse;
}

.col-name {
  width: 260px;
}

.col-mid {
  width: 120px;
}

.col-size {
  width: 81px;
}

th {
  padding: 0 0 7px;
  font-weight: normal;
  text-align: left;
}

.head {
  display: flex;
  align-items: center;
  height: 24px;
  padding-left: 6px;
  color: #4c607a;
}

.head-name {
  position: relative;
  gap: 10px;
  padding-left: 0;
}

.check {
  appearance: none;
  width: 13px;
  height: 13px;
  margin: 0;
  border: 1px solid #707070;
  background: #fff;
}

.sort {
  position: absolute;
  top: 1px;
  left: 50%;
  width: 8px;
  height: 4px;
  margin-left: -4px;
}

.split {
  border-left: 1px solid #e3ebf4;
}

.hot {
  justify-content: space-between;
  background: #f2f7fd;
  border: 1px solid #dce7f3;
}

.filter {
  width: 16px;
  height: 22px;
  justify-content: center;
  border-left: 1px solid #dce7f3;
}

td {
  height: 21px;
  padding: 0;
  white-space: nowrap;
}

.file-name {
  display: flex;
  align-items: center;
  gap: 4px;
  padding-left: 22px;
}

.meta {
  padding-left: 7px;
  color: #6d6d6d;
}

.size {
  padding: 0 8px 0 0;
  text-align: right;
}

.details {
  width: 276px;
  margin-left: 1px;
  padding: 7px 0 0 24px;
  border-left: 1px solid #f0f0f0;
}

.details h2 {
  margin: 0;
  font-size: 15px;
  line-height: 22px;
  font-weight: normal;
  color: #1e395b;
}

.preview {
  width: 88px;
  height: 98px;
  margin: 28px 0 8px 7px;
}

.details dl {
  display: flex;
  gap: 10px;
  margin: 0;
}

.details dt {
  color: #5a6779;
}

.details dd {
  margin: 0;
  color: #1e395b;
}

.status {
  display: flex;
  align-items: center;
  height: 23px;
  padding: 0 4px 0 14px;
}

.count {
  width: 55px;
  border-right: 1px solid #ececec;
  color: #1e395b;
}

.view {
  display: flex;
  justify-content: center;
  align-items: center;
  width: 22px;
  height: 23px;
  padding: 0;
  border: 0;
  background: none;
}

.view.active {
  border: 1px solid #26a0da;
  background: #cbe8f6;
}

/* taskbar */
.taskbar {
  display: flex;
  align-items: center;
  gap: 4px;
  height: 40px;
  background: #624b2b;
}

.start {
  display: flex;
  align-items: center;
  width: 48px;
  height: 40px;
  padding: 0 0 0 11px;
  border: 0;
  background: none;
}

.app {
  display: flex;
  justify-content: center;
  align-items: center;
  width: 58px;
  height: 38px;
  padding: 0;
  border: 1px solid transparent;
  background: none;
}

.app-icon {
  width: 30px;
  height: 30px;
}

.app.open {
  background: #857355;
  border-color: #aa9b82;
}

.app.current {
  background: linear-gradient(to right, #9c8f78 53px, #fff 53px, #fff 54px, #8c7c61 54px);
  border-color: #f5f1ea;
  padding-right: 4px;
}

.tray {
  display: flex;
  align-items: center;
  gap: 11px;
}

.clock {
  display: flex;
  flex-direction: column;
  gap: 2px;
  width: 84px;
  text-align: center;
  color: #fff;
}
</style>
